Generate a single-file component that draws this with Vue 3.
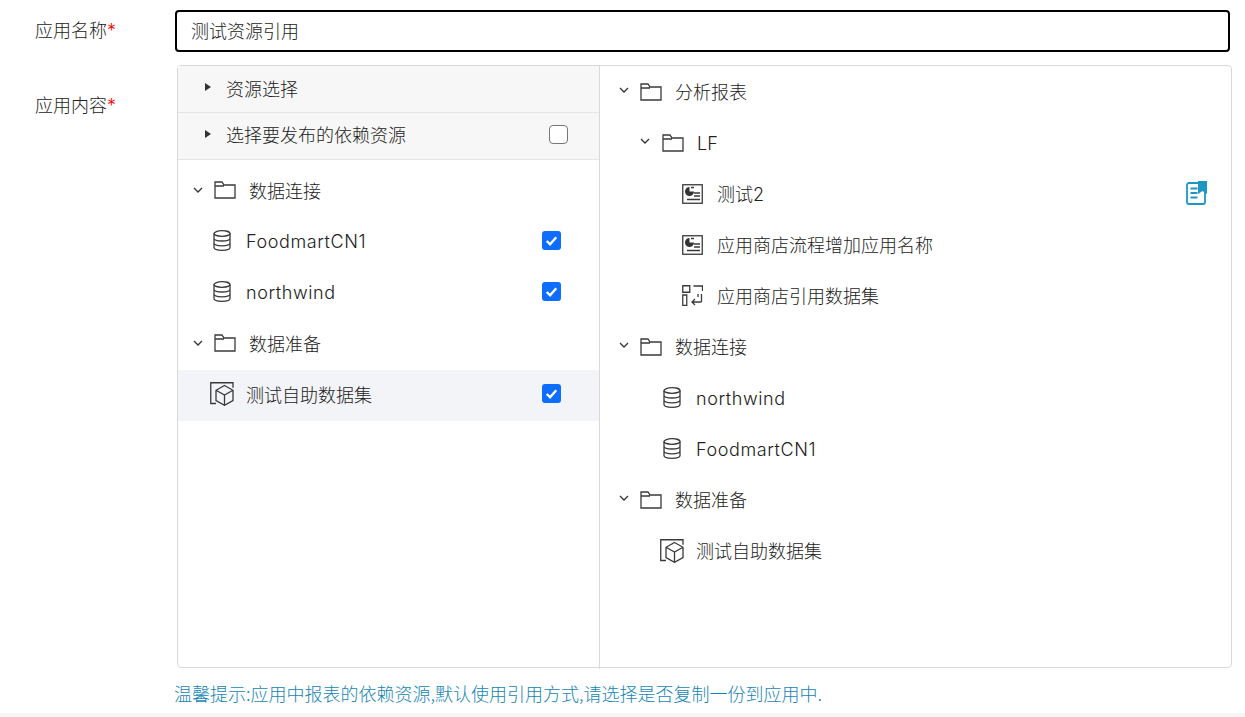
<script setup>
const leftRows = [
  { kind: 'folder', label: '数据连接' },
  { kind: 'db', label: 'FoodmartCN1', checked: true },
  { kind: 'db', label: 'northwind', checked: true },
  { kind: 'folder', label: '数据准备' },
  { kind: 'cube', label: '测试自助数据集', checked: true, active: true },
]
const rightRows = [
  { kind: 'folder', label: '分析报表', level: 0 },
  { kind: 'folder', label: 'LF', level: 1 },
  { kind: 'report', label: '测试2', level: 2, mark: true },
  { kind: 'report', label: '应用商店流程增加应用名称', level: 2 },
  { kind: 'flow', label: '应用商店引用数据集', level: 2 },
  { kind: 'folder', label: '数据连接', level: 0 },
  { kind: 'db', label: 'northwind', level: 1 },
  { kind: 'db', label: 'FoodmartCN1', level: 1 },
  { kind: 'folder', label: '数据准备', level: 0 },
  { kind: 'cube', label: '测试自助数据集', level: 1 },
]
</script>

<template>
  <div class="page">
    <div class="field name-field">
      <label class="label">应用名称<i>*</i></label>
      <div class="input"><span>测试资源引用</span></div>
    </div>
    <div class="field content-field">
      <label class="label content-label">应用内容<i>*</i></label>
      <div class="panel">
        <section class="left">
          <div class="head head-one">
            <span class="tri"></span><span class="head-text">资源选择</span>
          </div>
          <div class="head head-two">
            <span class="tri"></span><span class="head-text">选择要发布的依赖资源</span>
            <span class="box"></span>
          </div>
          <ul class="tree left-tree">
            <li v-for="row in leftRows" :key="row.label" class="row" :class="[row.kind, { active: row.active }]">
              <svg v-if="row.kind === 'folder'" class="chev" viewBox="0 0 10 6"><path d="M1 1l4 4 4-4" /></svg>
              <svg v-if="row.kind === 'folder'" class="ic folder-ic" viewBox="0 0 22 18"><path d="M1 1h7l2 3h11v13H1zM1 5h9" /></svg>
              <svg v-else-if="row.kind === 'db'" class="ic db-ic" viewBox="0 0 18 21"><ellipse cx="9" cy="3.500" rx="8" ry="2.800" /><path d="M1 3.500v14c0 1.600 3.600 2.800 8 2.800s8-1.200 8-2.800v-14M1 8.200c0 1.600 3.600 2.800 8 2.800s8-1.200 8-2.800M1 13c0 1.600 3.600 2.800 8 2.800s8-1.200 8-2.800" /></svg>
              <svg v-else class="ic cube-ic" viewBox="0 0 24 24"><path d="M6 21.500H.75V.75H23v5" /><path d="M14.500 3.500l8.500 4.800v10.200l-8.500 4.800L6 18.500V8.300zM6 8.300l8.500 4.800L23 8.300M14.500 13.100v10.200" /></svg>
              <span class="text">{{ row.label }}</span>
              <span v-if="row.checked" class="check">
                <svg viewBox="0 0 20 20"><path d="M5 10.500l3.500 3.500L15 6.500" /></svg>
              </span>
            </li>
          </ul>
        </section>
        <section class="right">
          <ul class="tree">
            <li v-for="(row, i) in rightRows" :key="i" class="row r-row" :class="[row.kind, 'lv' + row.level, { latin: row.label === 'LF' }]">
              <svg v-if="row.kind === 'folder'" class="chev" viewBox="0 0 10 6"><path d="M1 1l4 4 4-4" /></svg>
              <svg v-if="row.kind === 'folder'" class="ic folder-ic" viewBox="0 0 22 18"><path d="M1 1h7l2 3h11v13H1zM1 5h9" /></svg>
              <svg v-else-if="row.kind === 'db'" class="ic db-ic" viewBox="0 0 18 21"><ellipse cx="9" cy="3.500" rx="8" ry="2.800" /><path d="M1 3.500v14c0 1.600 3.600 2.800 8 2.800s8-1.200 8-2.800v-14M1 8.200c0 1.600 3.600 2.800 8 2.800s8-1.200 8-2.800M1 13c0 1.600 3.600 2.800 8 2.800s8-1.200 8-2.800" /></svg>
              <svg v-else-if="row.kind === 'cube'" class="ic cube-ic" viewBox="0 0 24 24"><path d="M6 21.500H.75V.75H23v5" /><path d="M14.500 3.500l8.500 4.800v10.200l-8.500 4.800L6 18.500V8.300zM6 8.300l8.500 4.800L23 8.300M14.500 13.100v10.200" /></svg>
              <svg v-else-if="row.kind === 'report'" class="ic report-ic" viewBox="0 0 21 20"><rect x="0.750" y="0.750" width="19.500" height="18.500" /><path class="fill" d="M7.500 3a4.500 4.500 0 1 0 4.500 4.500H7.500z" /><path d="M9 3.500h3M12 9h6M12 12h6M5 15.500h13" /></svg>
              <svg v-else class="ic flow-ic" viewBox="0 0 21 21"><path d="M.75.750h7v6.500h-7zM.75 10h4v10.500h-4zM11.500 1h9v5M19.500 9v7a1 1 0 0 1-1 1H10M13 14l-3 3 3 3M16 9v3" /></svg>
              <span class="text">{{ row.label }}</span>
              <svg v-if="row.mark" class="mark" viewBox="0 0 21 24">
                <path class="mark-line" d="M12 2H3a2 2 0 0 0-2 2v17a2 2 0 0 0 2 2h14a2 2 0 0 0 2-2V11M4.500 7.500h7M4.500 12h7M4.500 16.500h7" />
                <path class="mark-fill" d="M12 0h9v13l-4.500-3-4.500 3z" />
              </svg>
            </li>
          </ul>
        </section>
      </div>
    </div>
    <p class="tip">温馨提示:应用中报表的依赖资源,默认使用引用方式,请选择是否复制一份到应用中.</p>
    <div class="strip"></div>
  </div>
</template>

<style>
html, body { margin: 0; background: #fff; }
</style>

<style scoped>
.page {
  width: 1245px;
  height: 717px;
  box-sizing: border-box;
  padding-top: 10px;
  overflow: hidden;
  display: flex;
  flex-direction: column;
  font-family: Inter, "Noto Sans CJK SC", sans-serif;
  font-size: 18px;
  font-weight: 300;
  color: #222;
}
.field { display: flex; }
.name-field { height: 42px; align-items: center; }
.content-field { margin-top: 13px; }
.label {
  width: 140px;
  padding-left: 35px;
  line-height: 42px;
  height: 42px;
  margin-top: 0;
  flex: none;
}
.label i { color: #f00; font-style: normal; }
.content-label { padding-top: 20px; }
.input {
  width: 1055px;
  height: 42px;
  box-sizing: border-box;
  border: 2px solid #000;
  border-radius: 4px;
  padding-left: 14px;
  line-height: 40px;
  flex: none;
}
.panel {
  margin-left: 2px;
  width: 1055px;
  height: 603px;
  box-sizing: border-box;
  border: 1px solid #d9d9d9;
  border-radius: 4px;
  display: flex;
  flex: none;
}
.left {
  width: 421px;
  flex: none;
  border-right: 1px solid #d9d9d9;
  margin-bottom: -2px;
}
.right { flex: 1; }
.head {
  display: flex;
  align-items: center;
  background: #f7f7f7;
  padding-left: 27px;
  border-bottom: 1px solid #e5e5e5;
  box-sizing: border-box;
  height: 47px;
}
.head-one .head-text { margin-top: -3px; }
.head-two .head-text { margin-top: -5px; }
.tri {
  width: 0;
  height: 0;
  border-left: 6px solid #333;
  border-top: 4.500px solid transparent;
  border-bottom: 4.500px solid transparent;
  margin-right: 15px;
  margin-top: -4px;
}
.box {
  width: 19px;
  height: 19px;
  box-sizing: border-box;
  border: 1px solid #767676;
  border-radius: 4px;
  background: #fff;
  margin-left: auto;
  margin-right: 31px;
  margin-top: -4px;
}
.tree { list-style: none; margin: 0; padding: 0; }
.left-tree { padding-top: 6px; }
.row {
  height: 51px;
  display: flex;
  align-items: center;
  box-sizing: border-box;
}
.row.active { background: #f3f4f8; }
.left-tree .row { padding-left: 35px; }
.left-tree .row.folder { padding-left: 15px; }
.left-tree .row.folder .chev { margin-right: 11px; }
.left-tree .row.cube { padding-left: 32px; }
.left-tree .ic { margin-top: -4px; }
.left-tree .text { margin-top: -4px; }
.left-tree .db .text { margin-top: -2px; letter-spacing: 0.6px; }
.r-row .text { margin-top: -2px; }
.r-row.folder.lv0 .text { margin-top: -1px; }
.r-row.latin .text { margin-top: 2px; }
.r-row.db .text { margin-top: 2px; letter-spacing: 0.6px; }
.chev {
  width: 10px;
  height: 6px;
  flex: none;
  margin-right: 12px;
  margin-top: -3px;
  fill: none;
  stroke: #333;
  stroke-width: 1.300;
}
.ic {
  flex: none;
  fill: none;
  stroke: #3a3a3a;
  stroke-width: 1.300;
}
.folder-ic { width: 22px; height: 18px; margin-right: 13px; }
.db-ic { width: 18px; height: 21px; margin-right: 15px; }
.cube-ic { width: 24px; height: 24px; margin-right: 12px; }
.report-ic { width: 21px; height: 20px; margin-right: 14px; }
.flow-ic { width: 21px; height: 21px; margin-right: 14px; }
.report-ic .fill { fill: #333; stroke: none; }
.text { white-space: nowrap; }
.check {
  width: 19px;
  height: 19px;
  margin-left: auto;
  margin-right: 38px;
  margin-top: -4px;
  border-radius: 3px;
  background: #0d6efd;
  display: flex;
}
.check svg {
  width: 19px;
  height: 19px;
  fill: none;
  stroke: #fff;
  stroke-width: 2.500;
}
.r-row { padding-right: 24px; }
.r-row.folder.lv0 { padding-left: 19px; }
.r-row.folder.lv0 .chev { margin-right: 11px; }
.r-row.folder.lv1 { padding-left: 40px; }
.r-row.lv2 { padding-left: 82px; }
.r-row.db.lv1 { padding-left: 63px; }
.r-row.cube.lv1 { padding-left: 60px; }
.mark {
  width: 21px;
  height: 24px;
  margin-left: auto;
  margin-top: -2px;
}
.mark-line { fill: none; stroke: #1f95c4; stroke-width: 1.800; }
.mark-fill { fill: #1f95c4; }
.tip {
  margin: 13px 0 0 174px;
  line-height: 24px;
  color: #1585b5;
  white-space: nowrap;
  font-family: "Noto Sans CJK SC", sans-serif;
}
.strip {
  margin-top: auto;
  height: 4px;
  background: #f7f7f7;
}
</style>
